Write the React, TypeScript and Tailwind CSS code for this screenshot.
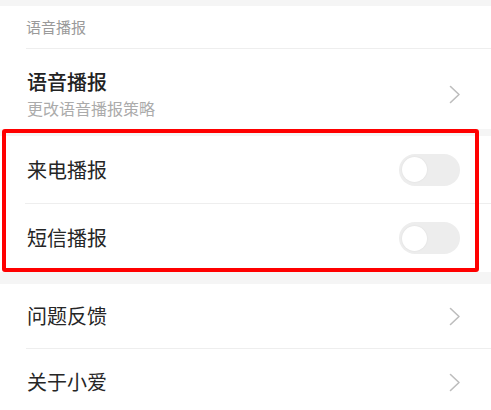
import React from "react";

const font = { fontFamily: '"Noto Sans CJK SC", "Noto Sans", sans-serif' };

function Chevron() {
  return (
    <svg width="12" height="19" viewBox="0 0 12 19" fill="none" className="shrink-0">
      <polyline
        points="1.5,1.5 10,9.5 1.5,17.5"
        stroke="#bdbdbd"
        strokeWidth="1.6"
        strokeLinecap="round"
        strokeLinejoin="round"
      />
    </svg>
  );
}

function Toggle() {
  return (
    <div className="w-[61px] h-[32px] rounded-full bg-[#ededed] flex items-center pl-[3px] shrink-0">
      <div className="w-[25px] h-[25px] rounded-full bg-white shadow-[0_0_2px_rgba(0,0,0,0.08)]" />
    </div>
  );
}

function Divider() {
  return <div className="ml-[26px] h-px bg-[#eeeeee]" />;
}

function LinkRow({ title, height }: { title: string; height: string }) {
  return (
    <div className={`flex items-center justify-between pl-[27px] pr-[30px] ${height}`}>
      <span className="text-[20px] leading-[26px] text-[#262626]">{title}</span>
      <Chevron />
    </div>
  );
}

function ToggleRow({ title, height }: { title: string; height: string }) {
  return (
    <div className={`flex items-center justify-between pl-[27px] pr-[31px] ${height}`}>
      <span className="text-[20px] leading-[26px] text-[#262626]">{title}</span>
      <Toggle />
    </div>
  );
}

export default function App() {
  return (
    <div className="w-[491px] h-[410px] overflow-hidden bg-white" style={font}>
      <div className="h-[6px] bg-[#f5f5f5]" />

      {/* Section header */}
      <div className="h-[42px] flex items-center pl-[26px]">
        <span className="text-[15px] leading-[20px] text-[#9a9a9a]">语音播报</span>
      </div>
      <Divider />

      {/* Voice broadcast item */}
      <div className="h-[80px] flex justify-between pl-[27px] pr-[30px]">
        <div className="flex flex-col pt-[20px]">
          <span className="text-[20px] leading-[26px] font-medium text-[#222222]">语音播报</span>
          <span className="text-[16px] leading-[20px] mt-[3px] text-[#ababab]">更改语音播报策略</span>
        </div>
        <div className="flex items-center pt-[10px]">
          <Chevron />
        </div>
      </div>

      {/* Toggles, highlighted */}
      <div className="relative">
        <div className="h-[7px] bg-[#f5f5f5]" />
        <ToggleRow title="来电播报" height="h-[67px]" />
        <div className="ml-[25px] h-px bg-[#eeeeee]" />
        <ToggleRow title="短信播报" height="h-[68px]" />
        <div className="absolute top-0 left-[2px] w-[477px] h-[143px] border-[4px] border-[#ff0000] rounded-[3px]" />
      </div>

      <div className="h-[12px] bg-[#f5f5f5]" />

      <LinkRow title="问题反馈" height="h-[64px]" />
      <Divider />
      <LinkRow title="关于小爱" height="h-[66px]" />
    </div>
  );
}
